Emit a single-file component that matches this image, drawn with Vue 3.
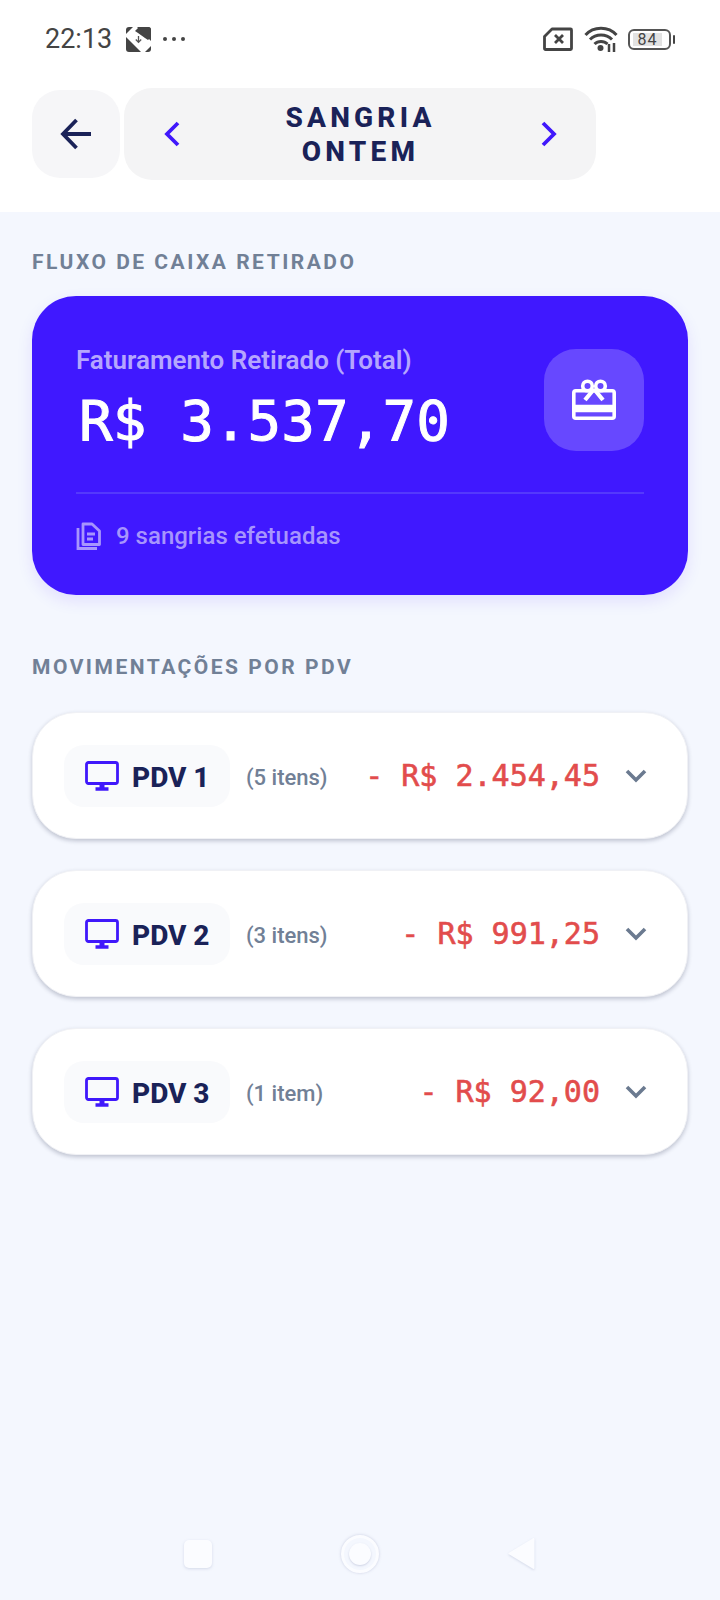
<script setup>
const pdvs = [
  { name: 'PDV 1', count: '(5 itens)', total: '- R$ 2.454,45' },
  { name: 'PDV 2', count: '(3 itens)', total: '- R$ 991,25' },
  { name: 'PDV 3', count: '(1 item)', total: '- R$ 92,00' }
]
</script>

<template>
  <div class="page">
    <header class="top">
      <div class="status">
        <div class="status-left">
          <span class="time">22:13</span>
          <svg class="notif" width="25" height="25" viewBox="0 0 25 25">
            <rect width="25" height="25" rx="3" fill="#444" />
            <path d="M7 0 H11 L25 14 V19 L19 25 H15 L0 10 V7 Z" fill="#fff" />
            <path d="M9 4 L13 0 H22 A3 3 0 0 1 25 3 V10 L22 13 L19 11 L12 6 Z" fill="#444" />
            <path d="M12.500 9v6M9.800 12.500l2.700 2.900 2.700-2.900" fill="none" stroke="#555" stroke-width="1.300" />
          </svg>
          <span class="dots"><i></i><i></i><i></i></span>
        </div>
        <div class="status-right">
          <svg class="sim" width="30" height="24" viewBox="0 0 30 24">
            <path d="M9 2 H27.500 A1 1 0 0 1 28.500 3 V21.500 A1 1 0 0 1 27.500 22.500 H2.500 A1 1 0 0 1 1.500 21.500 V9.500 Z" fill="none" stroke="#444" stroke-width="2.800" stroke-linejoin="round" />
            <path d="M12 8 L20 16 M20 8 L12 16" stroke="#444" stroke-width="2.800" />
          </svg>
          <svg width="34" height="26" viewBox="0 0 34 26">
            <g fill="none" stroke="#444" stroke-width="3">
              <path d="M1.500 9 C9.500 0 24.500 0 32.500 9" />
              <path d="M6 13.500 C12 7.500 22 7.500 28 13.500" />
              <path d="M10.500 18 C14 14.500 20 14.500 23.500 18" />
            </g>
            <circle cx="16.500" cy="22" r="3" fill="#444" />
            <path d="M25 18v8M30 17v9" stroke="#444" stroke-width="2.500" />
          </svg>
          <div class="battery">
            <div class="battery-body"><span class="battery-fill">84</span></div>
            <i class="battery-tip"></i>
          </div>
        </div>
      </div>

      <div class="nav-row">
        <button class="back">
          <svg width="32" height="32" viewBox="0 0 32 32" fill="none" stroke="#1a2258" stroke-width="3.800">
            <path d="M31 16 H3 M16.500 2 L3 16 L16.500 30" />
          </svg>
        </button>
        <div class="switcher">
          <svg width="16" height="26" viewBox="0 0 16 26" fill="none" stroke="#4018fb" stroke-width="3.800">
            <path d="M14 2 L3 13 L14 24" />
          </svg>
          <div class="title">SANGRIA<br />ONTEM</div>
          <svg width="16" height="26" viewBox="0 0 16 26" fill="none" stroke="#4018fb" stroke-width="3.800">
            <path d="M2 2 L13 13 L2 24" />
          </svg>
        </div>
      </div>
    </header>

    <main class="body">
      <h2 class="section first">FLUXO DE CAIXA RETIRADO</h2>
      <section class="hero">
        <div class="hero-main">
          <div>
            <div class="hero-label">Faturamento Retirado (Total)</div>
            <div class="hero-value">R$ 3.537,70</div>
          </div>
          <div class="hero-icon">
            <svg width="44" height="42" viewBox="0 0 44 42" fill="none" stroke="#fff" stroke-width="3.600">
              <rect x="1.800" y="11.800" width="40.400" height="27.400" rx="2" />
              <path d="M2 29.500 H42" stroke-width="7.500" />
              <circle cx="15.500" cy="7" r="4.800" />
              <circle cx="28.500" cy="7" r="4.800" />
              <path d="M22 10 L13 21 M22 10 L31 21" stroke-width="4.200" />
            </svg>
          </div>
        </div>
        <div class="hero-foot">
          <svg width="26" height="28" viewBox="0 0 26 28" fill="none" stroke="#a795fd" stroke-width="2.800">
            <path d="M7 2 H16 L23.500 9 V22.500 H7 Z" stroke-linejoin="round" />
            <path d="M2 6 V26.500 H21" />
            <path d="M11 12 H19 M11 17 H17" />
          </svg>
          <span>9 sangrias efetuadas</span>
        </div>
      </section>

      <h2 class="section second">MOVIMENTAÇÕES POR PDV</h2>
      <div class="list">
        <article v-for="pdv in pdvs" :key="pdv.name" class="row">
          <div class="chip">
            <svg width="34" height="30" viewBox="0 0 34 30" fill="none" stroke="#4018fb">
              <rect x="1.500" y="1.500" width="31" height="21" rx="2" stroke-width="2.800" />
              <path d="M17 23 V27" stroke-width="5" />
              <path d="M10.500 28 H23.500" stroke-width="3.500" />
            </svg>
            <span>{{ pdv.name }}</span>
          </div>
          <span class="count">{{ pdv.count }}</span>
          <span class="amount">{{ pdv.total }}</span>
          <svg class="caret" width="22" height="14" viewBox="0 0 22 14" fill="none" stroke="#6b7a90" stroke-width="3.600">
            <path d="M2 2 L11 11 L20 2" />
          </svg>
        </article>
      </div>
    </main>

    <footer class="softkeys">
      <i class="key-square"></i>
      <i class="key-circle"><b></b></i>
      <svg width="27" height="33" viewBox="0 0 27 33" class="key-back">
        <path d="M25.500 2 V31 L1.500 16.500 Z" fill="#fbfcff" stroke="#fbfcff" stroke-width="2" stroke-linejoin="round" />
      </svg>
    </footer>
  </div>
</template>

<style>
html, body {
  margin: 0;
  background: #f4f7fe;
}
</style>

<style scoped>
.page {
  width: 720px;
  height: 1600px;
  display: flex;
  flex-direction: column;
  background: #f4f7fe;
  font-family: Roboto, "Noto Sans", sans-serif;
  overflow: hidden;
}

.top {
  height: 212px;
  background: #fff;
  box-sizing: border-box;
  padding: 0 32px;
}

.status {
  height: 88px;
  display: flex;
  align-items: center;
  justify-content: space-between;
  padding: 0 13px 10px 13px;
  box-sizing: border-box;
}

.status-left,
.status-right {
  display: flex;
  align-items: center;
}

.time {
  font-size: 27px;
  color: #444;
  margin-right: 14px;
}

.dots {
  display: flex;
  gap: 5px;
  margin-left: 12px;
}

.dots i {
  width: 4px;
  height: 4px;
  border-radius: 50%;
  background: #444;
}

.status-right {
  gap: 10px;
}

.sim {
  margin-right: 1px;
}

.battery {
  display: flex;
  align-items: center;
  gap: 2px;
}

.battery-body {
  width: 43px;
  height: 21px;
  box-sizing: border-box;
  border: 2px solid #555;
  border-radius: 6px;
  padding: 2px 7px 2px 3px;
  display: flex;
}

.battery-fill {
  flex: 1;
  background: #e2e2e2;
  font-size: 16px;
  line-height: 14px;
  letter-spacing: 1px;
  color: #444;
  text-align: center;
}

.battery-tip {
  width: 2px;
  height: 9px;
  background: #444;
  border-radius: 1px;
}

.nav-row {
  display: flex;
  align-items: center;
  gap: 4px;
}

.back {
  width: 88px;
  height: 88px;
  border: 0;
  padding: 0;
  border-radius: 28px;
  background: #f6f6f8;
  display: flex;
  align-items: center;
  justify-content: center;
}

.switcher {
  width: 472px;
  height: 92px;
  box-sizing: border-box;
  padding: 0 39px 0 40px;
  border-radius: 28px;
  background: #f4f4f5;
  display: flex;
  align-items: center;
  justify-content: space-between;
}

.title {
  padding-top: 2px;
  font-size: 28px;
  line-height: 34px;
  font-weight: 800;
  letter-spacing: 4.200px;
  color: #1a2258;
  text-align: center;
}

.body {
  flex: 1;
  padding: 0 32px;
}

.section {
  margin: 0;
  font-size: 21px;
  line-height: 24px;
  font-weight: 700;
  letter-spacing: 2.500px;
  color: #718096;
}

.section.first {
  margin-top: 38px;
}

.section.second {
  margin-top: 60px;
}

.hero {
  margin-top: 22px;
  height: 299px;
  box-sizing: border-box;
  padding: 49px 44px 0;
  border-radius: 44px;
  background: #4018ff;
  box-shadow: 0 6px 16px rgba(64, 24, 255, 0.1);
}

.hero-main {
  display: flex;
  justify-content: space-between;
  align-items: flex-start;
  height: 147px;
  border-bottom: 2px solid #5539fc;
}

.hero-label {
  font-size: 26px;
  line-height: 30px;
  font-weight: 600;
  color: #b5a6fe;
}

.hero-value {
  margin: 12px 0 0 3px;
  font-family: "DejaVu Sans Mono", monospace;
  font-size: 56px;
  line-height: 68px;
  -webkit-text-stroke: 1px #fff;
  color: #fff;
}

.hero-icon {
  width: 100px;
  height: 102px;
  margin-top: 4px;
  border-radius: 32px;
  background: #6748ff;
  display: flex;
  align-items: center;
  justify-content: center;
}

.hero-foot {
  margin-top: 28px;
  display: flex;
  align-items: center;
  gap: 14px;
  font-size: 24px;
  font-weight: 500;
  color: #a795fd;
}

.list {
  margin-top: 33px;
  display: flex;
  flex-direction: column;
  gap: 31px;
}

.row {
  height: 127px;
  box-sizing: border-box;
  padding: 0 40px 0 31px;
  border-radius: 44px;
  background: #fff;
  border: 1px solid #f0f1f5;
  box-shadow: 0 2px 4px rgba(30, 40, 70, 0.25);
  display: flex;
  align-items: center;
}

.chip {
  width: 166px;
  height: 62px;
  box-sizing: border-box;
  padding-left: 21px;
  border-radius: 20px;
  background: #f9fafc;
  display: flex;
  align-items: center;
  gap: 13px;
  font-size: 28px;
  font-weight: 800;
  color: #1a2258;
}

.chip span {
  padding-top: 3px;
}

.count {
  margin-left: 16px;
  padding-top: 3px;
  font-size: 22px;
  font-weight: 500;
  color: #718096;
}

.amount {
  margin-left: auto;
  font-family: "DejaVu Sans Mono", monospace;
  font-size: 30px;
  -webkit-text-stroke: 0.6px #e24c4c;
  color: #e24c4c;
}

.caret {
  margin-left: 25px;
}

.softkeys {
  height: 90px;
  box-sizing: border-box;
  padding: 0 0 3px 184px;
  display: flex;
  align-items: center;
  gap: 129px;
}

.key-square {
  width: 28px;
  height: 28px;
  border-radius: 5px;
  background: #fbfcff;
  box-shadow: 0 1px 3px rgba(120, 130, 170, 0.25);
}

.key-circle {
  width: 38px;
  height: 38px;
  box-sizing: border-box;
  border-radius: 50%;
  background: #f4f7fe;
  box-shadow: 0 0 3px rgba(120, 130, 170, 0.35);
  border: 3px solid #fbfcff;
  display: flex;
  align-items: center;
  justify-content: center;
}

.key-circle b {
  width: 22px;
  height: 22px;
  border-radius: 50%;
  background: #fbfcff;
  box-shadow: 0 1px 2px rgba(120, 130, 170, 0.3);
}

.key-back {
  filter: drop-shadow(0 1px 1px rgba(120, 130, 170, 0.25));
}
</style>
